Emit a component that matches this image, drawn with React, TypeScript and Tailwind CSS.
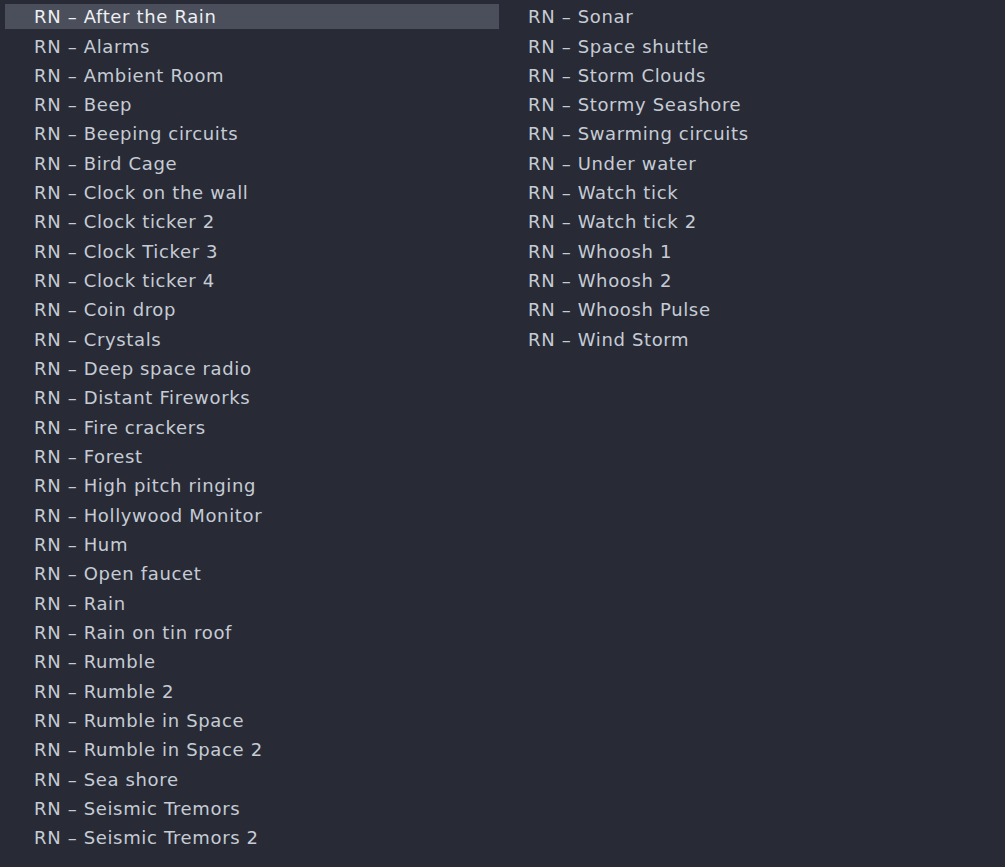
import React from "react";

const left = [
  "After the Rain",
  "Alarms",
  "Ambient Room",
  "Beep",
  "Beeping circuits",
  "Bird Cage",
  "Clock on the wall",
  "Clock ticker 2",
  "Clock Ticker 3",
  "Clock ticker 4",
  "Coin drop",
  "Crystals",
  "Deep space radio",
  "Distant Fireworks",
  "Fire crackers",
  "Forest",
  "High pitch ringing",
  "Hollywood Monitor",
  "Hum",
  "Open faucet",
  "Rain",
  "Rain on tin roof",
  "Rumble",
  "Rumble 2",
  "Rumble in Space",
  "Rumble in Space 2",
  "Sea shore",
  "Seismic Tremors",
  "Seismic Tremors 2",
];

const right = [
  "Sonar",
  "Space shuttle",
  "Storm Clouds",
  "Stormy Seashore",
  "Swarming circuits",
  "Under water",
  "Watch tick",
  "Watch tick 2",
  "Whoosh 1",
  "Whoosh 2",
  "Whoosh Pulse",
  "Wind Storm",
];

function Row({ name, selected }: { name: string; selected?: boolean }) {
  return (
    <div className="h-[29.33px] py-[2px]">
      <div
        className={
          "h-full flex items-center pl-[29px] whitespace-nowrap " +
          (selected ? "bg-[#4a4f5b] text-[#eef0f3]" : "text-[#c6ccd5]")
        }
      >
        RN – {name}
      </div>
    </div>
  );
}

export default function App() {
  return (
    <div
      className="w-[1005px] h-[867px] bg-[#282b36] overflow-hidden pt-[2px] pl-[5px] flex text-[18px] tracking-[0.65px]"
      style={{ fontFamily: '"DejaVu Sans", "Lucida Grande", sans-serif' }}
    >
      <div className="w-[494px] flex flex-col">
        {left.map((n, i) => (
          <Row key={n} name={n} selected={i === 0} />
        ))}
      </div>
      <div className="w-[495px] flex flex-col">
        {right.map((n) => (
          <Row key={n} name={n} />
        ))}
      </div>
    </div>
  );
}
